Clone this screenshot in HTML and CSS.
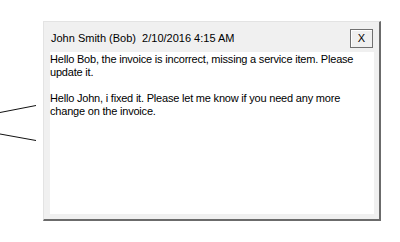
FILE: index.html
```html
<!DOCTYPE html>
<html>
<head>
<meta charset="utf-8">
<link rel="stylesheet" href="styles.css">
</head>
<body>
<svg class="leaders" width="44" height="242" viewBox="0 0 44 242">
  <path d="M0 112.5 L36 105.5" stroke="#111" stroke-width="1" fill="none"/>
  <path d="M0 134 L36 140.5" stroke="#111" stroke-width="1" fill="none"/>
</svg>
<div class="note">
  <div class="note-head">
    <span class="note-title">John Smith (Bob)  2/10/2016 4:15 AM</span>
    <button class="close-btn">X</button>
  </div>
  <div class="note-body">
    <p>Hello Bob, the invoice is incorrect, missing a service item. Please update it.</p>
    <p>Hello John, i fixed it. Please let me know if you need any more change on the invoice.</p>
  </div>
</div>
</body>
</html>
```
FILE: styles.css
```css
html, body {
  margin: 0;
  padding: 0;
  background: #ffffff;
}
body {
  width: 400px;
  height: 242px;
  overflow: hidden;
  font-family: "Liberation Sans", Arial, sans-serif;
  font-size: 11px;
  color: #000;
}
.leaders {
  position: absolute;
  left: 0;
  top: 0;
}
.note {
  margin: 21px 0 0 43px;
  width: 338px;
  height: 200px;
  box-sizing: border-box;
  background: #f0f0f0;
  border-top: 1px solid #e3e3e3;
  border-left: 1px solid #e3e3e3;
  border-right: 2px solid #6b6b6b;
  border-bottom: 2px solid #6b6b6b;
  display: flex;
  flex-direction: column;
  padding: 0 5px 5px 6px;
}
.note-head {
  height: 30px;
  display: flex;
  align-items: center;
  justify-content: space-between;
  flex: none;
}
.note-title {
  white-space: pre;
  padding-left: 1px;
  padding-top: 2px;
}
.close-btn {
  width: 23px;
  height: 19px;
  margin-top: 2px;
  margin-right: 1px;
  padding: 0;
  border: 1px solid #707070;
  background: #f0f0f0;
  box-shadow: inset 1px 1px 0 #fff;
  font-family: inherit;
  font-size: 11px;
  color: #000;
  line-height: 17px;
}
.note-body {
  flex: 1;
  background: #ffffff;
  padding: 1px 14px 0 0;
}
.note-body p {
  margin: 0 0 13px 0;
  line-height: 13px;
  letter-spacing: -0.2px;
}
```
